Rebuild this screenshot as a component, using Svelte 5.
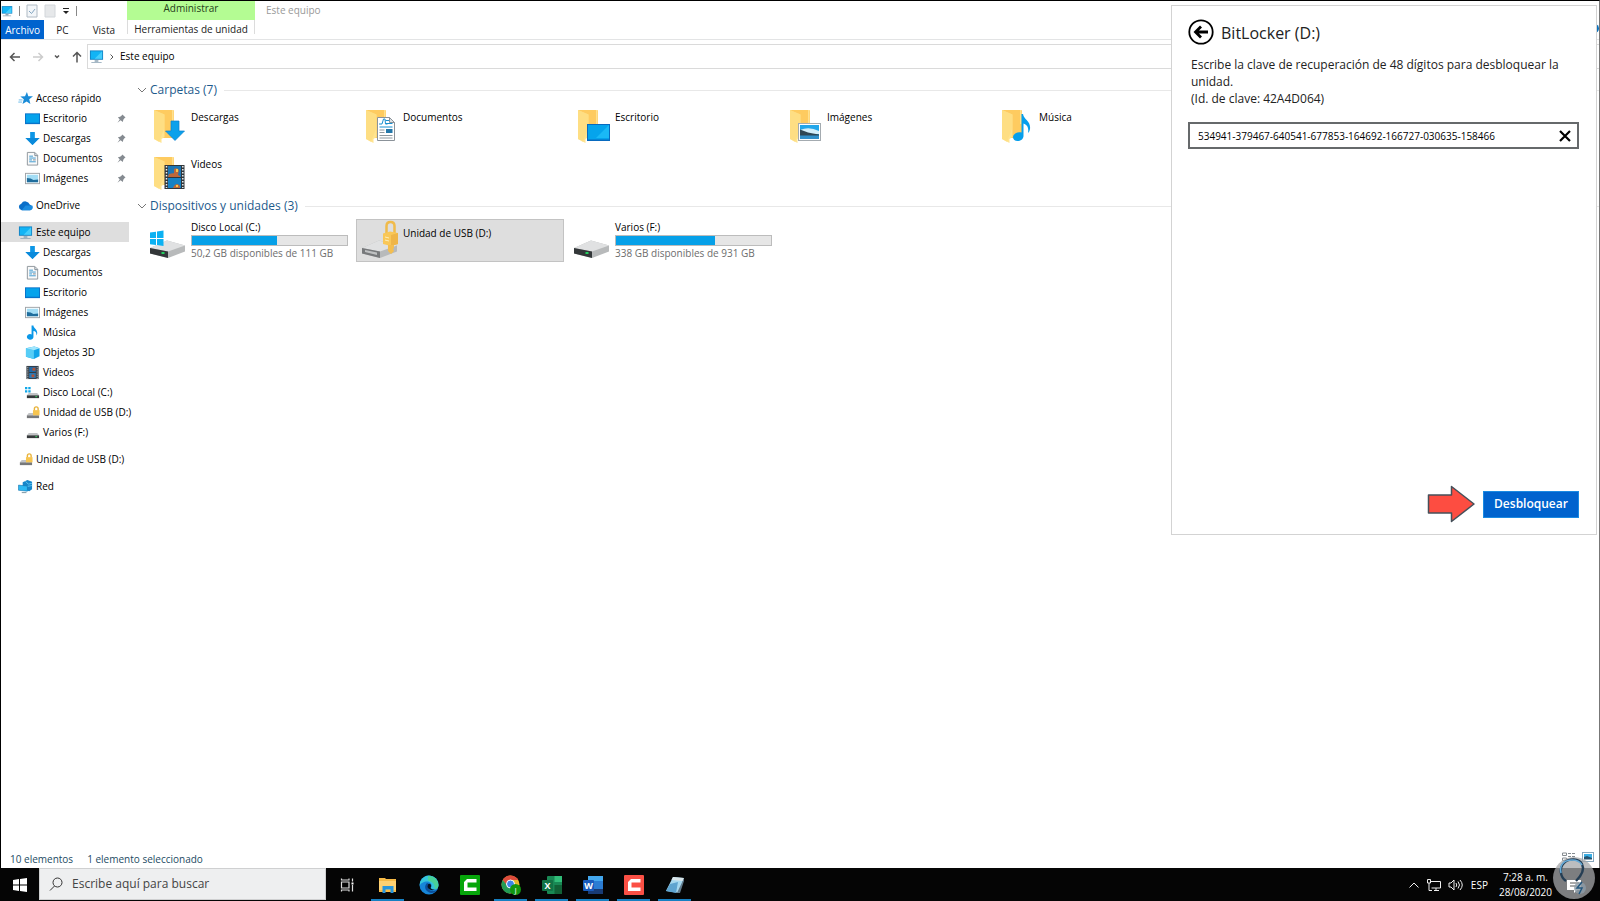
<script lang="ts">
	type Entry = { icon: string; label: string; level?: number; pinned?: boolean; active?: boolean; group?: boolean };
	type Drive = { icon: string; label: string; used?: number; free?: string; selected?: boolean };
	type Task = { icon: string; label: string; open?: boolean };

	const nav: Entry[] = [
		{ icon: 'star', label: 'Acceso rápido' },
		{ icon: 'desktop', label: 'Escritorio', level: 1, pinned: true },
		{ icon: 'download', label: 'Descargas', level: 1, pinned: true },
		{ icon: 'document', label: 'Documentos', level: 1, pinned: true },
		{ icon: 'picture', label: 'Imágenes', level: 1, pinned: true },
		{ icon: 'cloud', label: 'OneDrive', group: true },
		{ icon: 'pc', label: 'Este equipo', group: true, active: true },
		{ icon: 'download', label: 'Descargas', level: 1 },
		{ icon: 'document', label: 'Documentos', level: 1 },
		{ icon: 'desktop', label: 'Escritorio', level: 1 },
		{ icon: 'picture', label: 'Imágenes', level: 1 },
		{ icon: 'music', label: 'Música', level: 1 },
		{ icon: 'cube', label: 'Objetos 3D', level: 1 },
		{ icon: 'video', label: 'Videos', level: 1 },
		{ icon: 'diskWin', label: 'Disco Local (C:)', level: 1 },
		{ icon: 'diskLock', label: 'Unidad de USB (D:)', level: 1 },
		{ icon: 'disk', label: 'Varios (F:)', level: 1 },
		{ icon: 'diskLock', label: 'Unidad de USB (D:)', group: true },
		{ icon: 'network', label: 'Red', group: true }
	];

	const folders = [
		{ icon: 'download', label: 'Descargas' },
		{ icon: 'document', label: 'Documentos' },
		{ icon: 'desktop', label: 'Escritorio' },
		{ icon: 'picture', label: 'Imágenes' },
		{ icon: 'music', label: 'Música' },
		{ icon: 'video', label: 'Videos' }
	];

	const drives: Drive[] = [
		{ icon: 'windows', label: 'Disco Local (C:)', used: 55, free: '50,2 GB disponibles de 111 GB' },
		{ icon: 'locked', label: 'Unidad de USB (D:)', selected: true },
		{ icon: 'plain', label: 'Varios (F:)', used: 64, free: '338 GB disponibles de 931 GB' }
	];

	const tasks: Task[] = [
		{ icon: 'taskview', label: 'Vista de tareas' },
		{ icon: 'explorer', label: 'Explorador de archivos', open: true },
		{ icon: 'edge', label: 'Microsoft Edge' },
		{ icon: 'camtasia', label: 'Camtasia' },
		{ icon: 'chrome', label: 'Google Chrome', open: true },
		{ icon: 'excel', label: 'Excel', open: true },
		{ icon: 'word', label: 'Word', open: true },
		{ icon: 'recorder', label: 'Camtasia Recorder', open: true },
		{ icon: 'notepad', label: 'Bloc de notas', open: true }
	];

	let recoveryKey = $state('534941-379467-640541-677853-164692-166727-030635-158466');
	let search = $state('');
</script>

{#snippet pcIcon()}
	<rect x="1" y="1.5" width="14" height="10" fill="#1583c4" />
	<rect x="2" y="2.5" width="12" height="8" fill="#12b4f5" />
	<path d="M14 2.5V10.5H6Z" fill="#45cdfb" />
	<path d="M6 12h4v1.5H6zM2.5 14h11v1h-11z" fill="#8ba3b4" />
{/snippet}

{#snippet smallIcon(name: string)}
	<svg class="small-icon" viewBox="0 0 16 16" aria-hidden="true">
		{#if name === 'star'}
			<path d="M9.5 1 11 5.5l5 .1-4 3.1 1.200 5.100-4-2.600-4.400 2.600 1.400-5L2.500 5.800l5-.3z" fill="#1a8cd8" />
			<path d="M.8 9.500h4M.3 11.800h4" stroke="#63b9ea" stroke-width="1" />
		{:else if name === 'desktop'}
			<rect x="0" y="2.500" width="16" height="11.500" fill="#0873c9" />
			<rect x="1" y="3.500" width="14" height="9" fill="#05a3ec" />
		{:else if name === 'download'}
			<path d="M5.500 1h5v6.500H15.500L8 15 .5 7.500h5z" fill="#0d96e6" />
			<path d="M8 15 .5 7.500h15z" fill="#0a8adb" />
		{:else if name === 'document'}
			<path d="M2.500 1.500h8l3 3v10.500h-11z" fill="#fafafa" stroke="#8d949a" />
			<path d="M4.500 5.500h4M4.500 7.500h7M4.500 9.500h3M4.500 11.500h7" stroke="#3695cd" />
			<path d="M8.500 9.500h3M10.500 2v3h3" stroke="#75838d" fill="none" />
		{:else if name === 'picture'}
			<rect x=".5" y="2.500" width="15" height="11" fill="#fff" stroke="#9da2a6" />
			<rect x="2" y="4" width="12" height="8" fill="#a3ddf5" />
			<path d="M2 7.500l4 .5 3 1.500 5-.5v3H2z" fill="#1f6d9d" />
		{:else if name === 'cloud'}
			<path d="M4 13a3.600 3.600 0 0 1-.5-7A5 5 0 0 1 12.500 7 3.200 3.200 0 0 1 13 13z" fill="#0a6fc9" />
			<path d="M4 13h9a3.200 3.200 0 0 0 2.200-5L8 8z" fill="#1b8ce0" />
		{:else if name === 'pc'}
			{@render pcIcon()}
		{:else if name === 'music'}
			<path d="M7 .5h2c0 3 4.500 4 4 8.500-.2 1-.8 2-1 2 .5-3-.5-4-3-4.500V12.500a3.500 3 0 1 1-2-2.500z" fill="#0b98e8" />
		{:else if name === 'cube'}
			<path d="M1 3.500 10 1.500l5.500 2V12l-6 3L1 12.500z" fill="#12a5e9" />
			<path d="M1 3.500 9.500 5.500V15L1 12.500z" fill="#57cdf6" />
			<path d="M1 3.500 10 1.500l5.500 2-6 2z" fill="#a2e6fc" />
		{:else if name === 'video'}
			<rect x="1.500" y="1" width="13" height="14" fill="#333b43" />
			<rect x="4.500" y="2" width="7" height="5.500" fill="#236ba8" />
			<rect x="4.500" y="8.500" width="7" height="5.500" fill="#2b79b5" />
			<path d="M8 3h3v3H8zM7 10h3v3H7z" fill="#b55335" />
			<path d="M3 2v13M13 2v13" stroke="#d5dadd" stroke-dasharray="1 1" />
		{:else if name === 'network'}
			<path d="M5 3.500 10 1l5 2v8l-3 2-7-2z" fill="#1686ca" />
			<path d="M8 2.500l3 3 4-1M9 8l6-1" stroke="#62c4ef" fill="none" />
			<path d="M.5 6.500 10 7.500V13L.5 12z" fill="#2db9f3" stroke="#1271ab" stroke-width=".6" />
			<path d="M4 14.500h5" stroke="#7790a0" />
		{:else}
			<path d="M2 11 4 8.500h9l2 2.500z" fill="#c2c4c6" />
			<rect x="2" y="11" width="13" height="3" fill={name === 'diskLock' ? '#77797b' : '#36393b'} />
			{#if name !== 'diskLock'}
				<rect x="11" y="12" width="2" height="1" fill="#36da62" />
			{/if}
			{#if name === 'diskWin'}
				<path d="M0 2h2.500v2.500H0zM3.500 2H6v2.500H3.500zM0 5.500h2.500V8H0zM3.500 5.500H6V8H3.500z" fill="#10a7e8" />
			{:else if name === 'diskLock'}
				<path d="M10 6V4a2 2 0 0 1 4 0v2" fill="none" stroke="#e8b33b" stroke-width="1.500" />
				<rect x="8.500" y="5.500" width="7" height="5.500" fill="#f7c550" />
			{/if}
		{/if}
	</svg>
{/snippet}

{#snippet folderIcon(name: string)}
	<svg class="folder-icon" viewBox="0 0 34 34" aria-hidden="true">
		<path d="M1 1h19q1 0 1 1v27H8z" fill="#fecb60" />
		<path d="M19 1h1.500v14H19z" fill="#ffe18f" />
		<path d="M1 1l10.500 4.500V28L8.500 30v4L1 30z" fill="#ffe48f" />
		<path d="M1 1l10.500 4.500v13L6 33 1 30z" fill="#fedb7c" opacity=".6" />
		{#if name === 'download'}
			<path d="M18 12h8v10h5.500L22 31.500 12.500 22H18z" fill="#0ba1eb" stroke="#0a80cf" stroke-width=".7" />
		{:else if name === 'document'}
			<path d="M12.500 8.500h12l5 5v18h-17z" fill="#fff" stroke="#8b9299" />
			<path d="M24.500 8.500v5h5z" fill="#dde2e5" stroke="#8b9299" />
			<path d="M14 15h3l1.500-5h1.500l.5 5h2M20.500 11.500H24M21 14.500h6.500M14.500 18h13" stroke="#1790d0" fill="none" />
			<path d="M14.500 21h5M14.500 23.500h5M14.500 26.500h13M14.500 29h13" stroke="#8e989f" />
			<rect x="21" y="20" width="6.500" height="4" fill="#2377a9" />
		{:else if name === 'desktop'}
			<rect x="10.500" y="15.500" width="22" height="16" fill="#05a4ec" stroke="#086abf" />
			<path d="M32 16v13H19z" fill="#1ab9f6" />
			<path d="M11 30.500h21" stroke="#0785d5" />
		{:else if name === 'picture'}
			<rect x="9.500" y="14.500" width="22" height="17" fill="#fff" stroke="#a4abb0" />
			<rect x="11" y="16" width="19" height="14" fill="#22a6ea" />
			<path d="M11 21q9-4 19 1v3H11z" fill="#d3eefa" />
			<path d="M11 20.500l8 3 5 1 6 1V27H11z" fill="#2e4654" />
			<path d="M11 26.500h19V30H11z" fill="#318fca" />
		{:else if name === 'music'}
			<path d="M20.500 5h1.500c1 6 8 7 7 15-.3 2-1 3-2 4 1-6-1-8-4.500-9.500V27c0 3-3 5-6 5-2.500 0-4.500-1.500-4.500-4 0-3 4-5.500 8.500-4.500z" fill="#069fec" />
		{:else}
			<rect x="11.500" y="9" width="20" height="24" fill="#30363b" />
			<rect x="15" y="10" width="13" height="11" fill="#1d76b4" />
			<rect x="15" y="22" width="13" height="10" fill="#1682c4" />
			<path d="M21 13q3-2 5 1l-1 5-4-1zM16 18l5-1 6 3v1H15zM21 30q3-4 6 0v2h-7z" fill="#bd673a" />
			<path d="M23 13h2v3h-2zM23 29h2v2h-2z" fill="#f4c84a" />
			<path d="M13.500 10v22M29.800 10v22" stroke="#eef0f1" stroke-width="1.500" stroke-dasharray="1.500 1.500" />
		{/if}
	</svg>
{/snippet}

{#snippet driveIcon(name: string)}
	<svg class="drive-icon" viewBox="0 0 40 40" aria-hidden="true">
		<path d="M1 28 18 20.500 36 25.500v6L19 38 1 33.500z" fill="#b8babb" />
		<path d="M1 28 18 20.500 36 25.500 19 31.500z" fill="#e0e1e2" />
		<path d="M1 28l18 3.500V38L1 33.500z" fill={name === 'locked' ? '#77797b' : '#333739'} />
		{#if name === 'locked'}
			<path d="M4 30l12 2.500v2.500L4 32z" fill="#bfc1c2" />
		{:else}
			<rect x="12.500" y="32" width="3" height="2" fill="#23cf5f" />
		{/if}
		{#if name === 'windows'}
			<path d="M1 12.500l6-.8V18H1zM8 11.500l6.500-1V18H8zM1 19h6v6l-6-.7zM8 19h6.500v7L8 25z" fill="#0bb1f2" />
		{:else if name === 'locked'}
			<path d="M25.500 13V6q0-4 4-4t4 4v7" fill="none" stroke="#f0bb4b" stroke-width="2.500" />
			<path d="M22 13.500l7-2 8 1.500v11l-7 2-8-2z" fill="#f9c758" />
			<path d="M30 15l7-2v11l-7 2z" fill="#efb548" />
			<path d="M27 25h6v3l-1 1 1 2-3 3-3-3z" fill="#f4be50" />
			<path d="M24 17l4 1M24 20l4 1" stroke="#fff0b7" />
		{/if}
	</svg>
{/snippet}

{#snippet taskIcon(name: string)}
	<svg class="task-icon" viewBox="0 0 20 20" aria-hidden="true">
		{#if name === 'taskview'}
			<path d="M4.500 7h7.500v6H4.500zM4.500 3.500v1.500H12V3.500M4.500 16.500V15H12v1.500M15.500 3.500v3M15.500 10v6.500" fill="none" stroke="#dedede" stroke-width="1.200" />
			<rect x="14.500" y="7.500" width="2" height="2" fill="#fff" />
		{:else if name === 'explorer'}
			<path d="M1 3h6l1 1h10v13H1z" fill="#f7ba47" />
			<path d="M1 6h17v9H1z" fill="#fed173" />
			<path d="M4.500 18v-7h11v7h-3v-3.500h-5V18z" fill="#2896dd" />
		{:else if name === 'edge'}
			<circle cx="10" cy="10" r="9.500" fill="#1686d9" />
			<path d="M1 7a9.500 9.500 0 0 1 18.500 3c0 3-2 4.500-4.500 4.500-2 0-3.500-1-3-2 2-3-1-6-4-6C5 6.500 1.500 8 .6 11z" fill="#35c5dc" />
			<path d="M9 1a9.500 9.500 0 0 1 10.500 9c0 2-1 4-3.500 4.500 0-5-2-8-7-9z" fill="#54d873" opacity=".65" />
			<path d="M8 8c-4 4-1 9 4 10 3 0 5-1 6-3-4 2-8 1-9-2-.5-2 .5-3 1.500-4z" fill="#0b4e9b" />
			<path d="M9 9.500q2-1.500 3 .5.5 1-.3 2.500 0 2 4 2-3 1.500-6-.5-2-2-.7-4.500z" fill="#07131f" />
		{:else if name === 'camtasia' || name === 'recorder'}
			<rect width="20" height="20" rx="1" fill={name === 'camtasia' ? '#07a60b' : '#fb5045'} />
			<path d="M16.500 4H7L4 7v9h12.500v-3.500H7.500V7.500h9z" fill="#fff" />
		{:else if name === 'chrome'}
			<circle cx="9.500" cy="9.500" r="9" fill="#e8b82c" />
			<path d="M1.700 5A9 9 0 0 1 17.300 5H9.500L6 11z" fill="#de4c3c" />
			<path d="M1.700 5a9 9 0 0 0 7.800 13.500l3-6.500-6-1z" fill="#239b55" />
			<circle cx="9.500" cy="9" r="4" fill="#3e86e8" stroke="#fff" stroke-width="1" />
			<circle cx="14.500" cy="14.500" r="5.500" fill="#11970f" />
			<text x="14.500" y="17.500" text-anchor="middle" font-size="8" fill="#fff">J</text>
		{:else if name === 'excel'}
			<rect x="5" y="1" width="15" height="18" rx="1" fill="#198854" />
			<path d="M12.500 1H20v6h-7.500z" fill="#31bd78" />
			<path d="M12.500 10H20v9h-7.500z" fill="#116136" />
			<rect y="5" width="11" height="11" rx="1" fill="#127245" />
			<text x="5.500" y="13.500" text-anchor="middle" font-size="9" font-weight="700" fill="#fff">X</text>
		{:else if name === 'word'}
			<rect x="5" y="1" width="15" height="18" rx="1" fill="#2b7cd3" />
			<path d="M5 1h15v5H5z" fill="#43a7ee" />
			<path d="M5 14h15v5H5z" fill="#183b75" />
			<rect y="5" width="11" height="11" rx="1" fill="#195bbd" />
			<text x="5.500" y="13.500" text-anchor="middle" font-size="9" font-weight="700" fill="#fff">W</text>
		{:else}
			<path d="M8 2l11 1-5 15L1 16z" fill="#a6d8ef" />
			<path d="M8 2l11 1-1 3L6.500 5z" fill="#d9e5ea" />
			<path d="M5 9l8-2-2 11L1 16z" fill="#5ea4d0" />
			<path d="M19 3v3l-4 12h-3z" fill="#607b8d" />
		{/if}
	</svg>
{/snippet}

<div class="screen">
	<main class="window">
		<header class="ribbon">
			<div class="quick">
				<svg class="quick-pc" viewBox="0 0 16 16" aria-hidden="true">{@render pcIcon()}</svg>
				<span class="bar"></span>
				<button aria-label="Propiedades">
					<svg width="12" height="14" viewBox="0 0 12 14"><path d="M1 1h10v12H1z" fill="#f3f6f9" stroke="#afbac4" /><path d="M3 7l2.500 2.500L9 5" fill="none" stroke="#82a5c1" /></svg>
				</button>
				<button aria-label="Nueva carpeta">
					<svg width="12" height="14" viewBox="0 0 12 14"><path d="M1 1h10v12H1z" fill="#e6e8ea" stroke="#d2d6da" /></svg>
				</button>
				<button aria-label="Personalizar">
					<svg width="8" height="8" viewBox="0 0 8 8"><path d="M1 1.500h6" stroke="#222" /><path d="M1 4h6L4 7z" fill="#222" /></svg>
				</button>
				<span class="bar"></span>
			</div>
			<div class="context">Administrar</div>
			<h1 class="caption">Este equipo</h1>
			<nav class="tabs" aria-label="Cinta">
				<button class="tab tab--file">Archivo</button>
				<button class="tab">PC</button>
				<button class="tab">Vista</button>
			</nav>
			<button class="tab tab--context">Herramientas de unidad</button>
		</header>

		<div class="address">
			<div class="history">
				<button aria-label="Atrás"><svg width="12" height="12" viewBox="0 0 12 12"><path d="M11 6H1.500M5.500 2l-4 4 4 4" /></svg></button>
				<button class="off" aria-label="Adelante"><svg width="12" height="12" viewBox="0 0 12 12"><path d="M1 6h9.500M6.500 2l4 4-4 4" /></svg></button>
				<button aria-label="Recientes"><svg width="6" height="12" viewBox="0 0 6 12"><path d="M1 4.500l2 2 2-2" /></svg></button>
				<button aria-label="Subir"><svg width="12" height="12" viewBox="0 0 12 12"><path d="M6 11.500V1.500M2 5.500l4-4 4 4" /></svg></button>
			</div>
			<div class="path">
				<svg class="path-pc" viewBox="0 0 16 16" aria-hidden="true">{@render pcIcon()}</svg>
				<svg width="6" height="8" viewBox="0 0 6 8" aria-hidden="true"><path d="M1.500 1.500 4 4 1.500 6.500" fill="none" stroke="#555" /></svg>
				<span>Este equipo</span>
			</div>
		</div>

		<div class="body">
			<nav class="sidebar" aria-label="Panel de navegación">
				{#each nav as item}
					<a
						href="#top"
						class="entry"
						class:entry--child={item.level === 1}
						class:entry--group={item.group}
						class:entry--active={item.active}
					>
						{@render smallIcon(item.icon)}
						<span>{item.label}</span>
						{#if item.pinned}
							<svg class="pin" viewBox="0 0 10 10" aria-hidden="true"><path d="M6 .5l3.500 3.500-1 .5-1.500 2L6.500 9 4 7 .5 9.700 3 6 1 3.500l2.500-.5 2-1.500z" fill="#858b91" /></svg>
						{/if}
					</a>
				{/each}
			</nav>

			<div class="content">
				<section>
					<h2>
						<svg width="10" height="8" viewBox="0 0 10 8" aria-hidden="true"><path d="M1 2l4 4 4-4" /></svg>
						Carpetas (7)
					</h2>
					<div class="tiles">
						{#each folders as folder}
							<div class="tile">
								{@render folderIcon(folder.icon)}
								<span class="tile-name">{folder.label}</span>
							</div>
						{/each}
					</div>
				</section>
				<section>
					<h2>
						<svg width="10" height="8" viewBox="0 0 10 8" aria-hidden="true"><path d="M1 2l4 4 4-4" /></svg>
						Dispositivos y unidades (3)
					</h2>
					<div class="tiles">
						{#each drives as drive}
							<div class="tile tile--drive" class:tile--selected={drive.selected}>
								{@render driveIcon(drive.icon)}
								{#if drive.free}
									<div class="usage">
										<span>{drive.label}</span>
										<div class="meter"><div class="meter-fill" style="width: {drive.used}%"></div></div>
										<span class="free">{drive.free}</span>
									</div>
								{:else}
									<span class="tile-name">{drive.label}</span>
								{/if}
							</div>
						{/each}
					</div>
				</section>
			</div>
		</div>

		<footer class="status">
			<span>10 elementos</span>
			<span>1 elemento seleccionado</span>
			<div class="views">
				<svg width="14" height="10" viewBox="0 0 14 10" aria-hidden="true"><path d="M.5 1h4v2.500h-4zM.5 6h4v2.500h-4zM6 1.500h3M10 1.500h3M6 4.500h3M10 4.500h3M6 7.500h3M10 7.500h3" fill="none" stroke="#858b90" /></svg>
				<svg width="12" height="10" viewBox="0 0 12 10" aria-hidden="true"><rect x=".5" y=".5" width="11" height="9" fill="#fff" stroke="#87a7bd" /><path d="M2 2h8v5H2z" fill="#39aee5" /><path d="M2 5l3-1 5 2v1.500H2z" fill="#26536f" /></svg>
			</div>
		</footer>

		<span class="help" aria-hidden="true"></span>

		<aside class="bitlocker">
			<header>
				<button class="back" aria-label="Volver">
					<svg width="26" height="26" viewBox="0 0 26 26"><circle cx="13" cy="13" r="11.700" fill="none" stroke="#000" stroke-width="1.800" /><path d="M20 13H8M13 7.500 7.500 13l5.500 5.500" fill="none" stroke="#000" stroke-width="2.800" /></svg>
				</button>
				<h2>BitLocker (D:)</h2>
			</header>
			<label for="recovery">
				Escribe la clave de recuperación de 48 dígitos para desbloquear la unidad.<br />(Id. de clave: 42A4D064)
			</label>
			<div class="key">
				<input id="recovery" type="text" bind:value={recoveryKey} />
				<button aria-label="Borrar" onclick={() => (recoveryKey = '')}>
					<svg width="12" height="12" viewBox="0 0 12 12"><path d="M1 1l10 10M11 1 1 11" stroke="#000" stroke-width="2.200" /></svg>
				</button>
			</div>
			<div class="actions">
				<svg width="48" height="38" viewBox="0 0 48 38" aria-hidden="true"><path d="M1.500 10h23V1.500L47 19 24.500 36.500V28h-23z" fill="#fd4d41" stroke="#46505a" stroke-width="1.500" stroke-linejoin="round" /></svg>
				<button class="unlock">Desbloquear</button>
			</div>
		</aside>
	</main>

	<footer class="taskbar">
		<button class="start" aria-label="Inicio">
			<svg width="14" height="14" viewBox="0 0 14 14"><path d="M0 2l6-.9v5.500H0zM7 1l7-1v6.600H7zM0 7.500h6V13l-6-.9zM7 7.500h7V14l-7-1z" fill="#fff" /></svg>
		</button>
		<label class="search">
			<svg width="14" height="14" viewBox="0 0 14 14" aria-hidden="true"><circle cx="8.500" cy="5.500" r="4.500" /><path d="M5.500 9 1 13.500" /></svg>
			<input type="text" placeholder="Escribe aquí para buscar" aria-label="Buscar" bind:value={search} />
		</label>
		<div class="tasks">
			{#each tasks as task}
				<button class="task" class:task--open={task.open} aria-label={task.label}>
					{@render taskIcon(task.icon)}
				</button>
			{/each}
		</div>
		<div class="tray">
			<svg width="12" height="12" viewBox="0 0 12 12" aria-hidden="true"><path d="M1.500 8.500 6 4l4.500 4.500" /></svg>
			<svg width="14" height="14" viewBox="0 0 14 14" aria-hidden="true"><path d="M4 3.500h9.500v6.500H4.500M7 12.500h5M9 10v2.500M.5 1.500h3v3.500h-3zM2 5v7.500h3" /></svg>
			<svg width="16" height="14" viewBox="0 0 16 14" aria-hidden="true"><path d="M1 5h2l3-3v10L3 9H1zM8 5q1.500 2 0 4M10 3.500q3 3.500 0 7M12 2q4.500 5 0 10" /></svg>
			<span class="lang">ESP</span>
			<time datetime="2020-08-28T07:28">7:28 a. m.<br />28/08/2020</time>
			<div class="notify">
				<svg width="44" height="44" viewBox="0 0 44 44" aria-hidden="true">
					<circle cx="22" cy="22" r="21" fill="#a5a7a9" fill-opacity=".75" />
					<path d="M15 24h14v10h-4l-3 3v-3h-7z" fill="#fff" />
					<path d="M18 27h9M18 30h7" stroke="#555" />
					<path d="M14 25C8 21 7 12 12 7s15-5 18 1-1 12-6 17" fill="none" stroke="#253e54" stroke-width="2.400" />
					<path d="M9 17C7 9 12 4 20 4q7 0 10 5" fill="none" stroke="#67abd8" stroke-width="1.500" />
					<circle cx="28" cy="32" r="6" fill="#8d9ca8" fill-opacity=".8" />
					<path d="M30 26l-5 6h5l-3 6" fill="none" stroke="#24577e" stroke-width="1.500" />
				</svg>
			</div>
		</div>
	</footer>
</div>

<style>
	:global(body) {
		margin: 0;
		background: #fff;
	}

	.screen {
		display: flex;
		flex-direction: column;
		min-height: 100vh;
		font-family: 'Open Sans', 'Noto Sans', sans-serif;
		font-size: 10px;
		line-height: 14px;
		color: #000;
	}

	button,
	input {
		margin: 0;
		padding: 0;
		border: 0;
		background: none;
		color: inherit;
		font: inherit;
	}

	svg {
		display: block;
		flex: none;
	}

	h1,
	h2 {
		margin: 0;
		font-weight: 400;
	}

	.window {
		position: relative;
		display: flex;
		flex: 1;
		flex-direction: column;
		border: 1px solid #000;
		border-right-color: #777;
		border-bottom: 0;
		background: #fff;
	}

	/* Title bar and ribbon tabs */
	.ribbon {
		display: grid;
		grid-template-columns: 126px 128px 1fr;
		grid-template-rows: 19px 19px;
		border-bottom: 1px solid #e3e4e5;
	}

	.quick {
		display: flex;
		align-items: center;
		gap: 6px;
	}

	.quick button {
		display: flex;
	}

	.quick-pc {
		width: 12px;
		height: 14px;
	}

	.bar {
		width: 1px;
		height: 10px;
		background: #888;
	}

	.context {
		background: #b4fc93;
		text-align: center;
		color: #26401c;
		line-height: 15px;
	}

	.caption {
		padding-left: 11px;
		color: #999;
		font-size: 10px;
		line-height: 18px;
	}

	.tabs {
		display: flex;
	}

	.tab {
		padding: 0 12px;
		line-height: 18px;
		color: #222;
	}

	.tab--file {
		width: 44px;
		padding: 0;
		background: #0063ce;
		color: #fff;
	}

	.tab--context {
		height: 14px;
		padding: 0;
		border: solid #dcdcdc;
		border-width: 0 1px;
	}

	/* Address bar */
	.address {
		display: flex;
		align-items: center;
		padding-top: 4px;
	}

	.history {
		display: flex;
		align-items: center;
		justify-content: space-between;
		width: 74px;
		padding: 0 4px 0 8px;
	}

	.history button {
		display: flex;
	}

	.history path {
		fill: none;
		stroke: #555;
		stroke-width: 1.500;
	}

	.history .off path {
		stroke: #ccc;
	}

	.path {
		display: flex;
		flex: 1;
		align-items: center;
		gap: 5px;
		height: 23px;
		padding-left: 1px;
		border: 1px solid #dadada;
		border-right: 0;
	}

	.path span {
		padding-bottom: 1px;
	}

	.path-pc {
		width: 15px;
		height: 15px;
	}

	.body {
		display: flex;
		flex: 1;
	}

	/* Navigation pane */
	.sidebar {
		width: 128px;
		padding-top: 19px;
	}

	.entry {
		display: flex;
		align-items: center;
		gap: 3px;
		height: 20px;
		padding-left: 17px;
		color: inherit;
		text-decoration: none;
		white-space: nowrap;
	}

	.entry--child {
		padding-left: 24px;
	}

	.entry--group {
		margin-top: 7px;
	}

	.entry--active {
		background: #dedede;
	}

	.small-icon {
		width: 15px;
		height: 15px;
	}

	.pin {
		width: 9px;
		height: 9px;
		margin-left: auto;
		margin-right: 3px;
	}

	/* Item list */
	.content {
		flex: 1;
		padding: 11px 0 0 8px;
	}

	.content h2 {
		display: flex;
		align-items: center;
		gap: 3px;
		height: 20px;
		color: #1d5a8c;
		font-size: 12px;
		line-height: 20px;
	}

	.content h2 path {
		fill: none;
		stroke: #777;
	}

	.content h2::after {
		content: '';
		flex: 1;
		height: 1px;
		margin-left: 4px;
		background: #e8e8e8;
	}

	.tiles {
		display: grid;
		grid-template-columns: repeat(auto-fill, 208px);
		gap: 4px;
		max-width: 1060px;
		padding: 3px 0 3px 7px;
	}

	.tile {
		display: flex;
		box-sizing: border-box;
		height: 43px;
		padding: 5px 0 0 8px;
		border: 1px solid transparent;
		white-space: nowrap;
	}

	.tile--drive {
		padding: 0 0 0 4px;
	}

	.tile--selected {
		border-color: #c3c3c3;
		background: #dedede;
	}

	.tile-name {
		padding-top: 1px;
	}

	.tile--drive .tile-name {
		padding-top: 6px;
	}

	.folder-icon {
		width: 34px;
		height: 34px;
		margin-right: 4px;
	}

	.drive-icon {
		width: 40px;
		height: 40px;
		margin-right: 2px;
	}

	.usage {
		display: flex;
		flex-direction: column;
		width: 157px;
	}

	.meter {
		height: 9px;
		margin-top: 1px;
		border: 1px solid #bcbcbc;
		background: #e6e6e6;
	}

	.meter-fill {
		height: 100%;
		background: #06a0e8;
	}

	.free {
		color: #6d6d6d;
	}

	.status {
		display: flex;
		gap: 14px;
		padding: 0 5px 1px 9px;
		color: #234a63;
		line-height: 16px;
	}

	.views {
		display: flex;
		align-items: flex-end;
		gap: 6px;
		margin-left: auto;
		padding-bottom: 5px;
	}

	/* Help button, mostly behind the flyout */
	.help {
		position: absolute;
		top: 23px;
		right: 0;
		width: 9px;
		height: 9px;
		border-radius: 50%;
		background: #0b71bb;
	}

	/* BitLocker flyout */
	.bitlocker {
		position: absolute;
		top: 4px;
		right: 2px;
		display: flex;
		flex-direction: column;
		box-sizing: border-box;
		width: 426px;
		min-height: 530px;
		padding: 11px 17px 11px 16px;
		border: 1px solid #d3d3d3;
		background: #fff;
	}

	.bitlocker header {
		display: flex;
		align-items: center;
		gap: 7px;
	}

	.bitlocker h2 {
		padding-top: 2px;
		font-size: 16px;
		line-height: 28px;
		color: #222;
	}

	.back {
		display: flex;
	}

	.bitlocker label {
		padding: 9px 20px 0 3px;
		color: #222;
		font-size: 12px;
		line-height: 17px;
	}

	.key {
		display: flex;
		align-items: center;
		height: 23px;
		margin-top: 15px;
		border: 2px solid #66696b;
	}

	.key input {
		flex: 1;
		min-width: 0;
		padding-left: 8px;
		outline: 0;
	}

	.key button {
		padding-right: 6px;
	}

	.actions {
		display: flex;
		align-items: center;
		justify-content: flex-end;
		gap: 8px;
		margin-top: auto;
	}

	.unlock {
		width: 96px;
		height: 27px;
		border: 1px solid #1a8ae2;
		background: #0063ce;
		color: #fff;
		font-size: 12px;
		font-weight: 600;
	}

	/* Taskbar, above the window so the badge can overlap the status bar */
	.taskbar {
		position: relative;
		display: flex;
		height: 33px;
		background: #050505;
		color: #fff;
	}

	.start {
		display: flex;
		align-items: center;
		justify-content: center;
		width: 39px;
	}

	.search {
		display: flex;
		align-items: center;
		gap: 9px;
		box-sizing: border-box;
		width: 287px;
		margin-bottom: 1px;
		padding-left: 9px;
		border: 1px solid #cfd0d1;
		background: #eeeff0;
		color: #444;
		font-size: 12px;
	}

	.search circle,
	.search path {
		fill: none;
		stroke: #333;
	}

	.search input {
		flex: 1;
		min-width: 0;
		outline: 0;
	}

	.search input::placeholder {
		color: #444;
		opacity: 1;
	}

	.tasks {
		display: flex;
		gap: 8px;
		padding-left: 4px;
	}

	.task {
		display: flex;
		align-items: center;
		justify-content: center;
		width: 33px;
		border: solid transparent;
		border-width: 2px 0;
	}

	.task--open {
		border-bottom-color: #1680c2;
	}

	.task-icon {
		width: 20px;
		height: 20px;
	}

	.tray {
		display: flex;
		align-items: center;
		gap: 7px;
		margin-left: auto;
		padding-right: 4px;
	}

	.tray > svg path {
		fill: none;
		stroke: #eee;
	}

	.lang {
		padding-right: 4px;
	}

	time {
		text-align: center;
		line-height: 15px;
	}

	.notify {
		display: flex;
		margin: -16px 0 -2px -7px;
	}
</style>
